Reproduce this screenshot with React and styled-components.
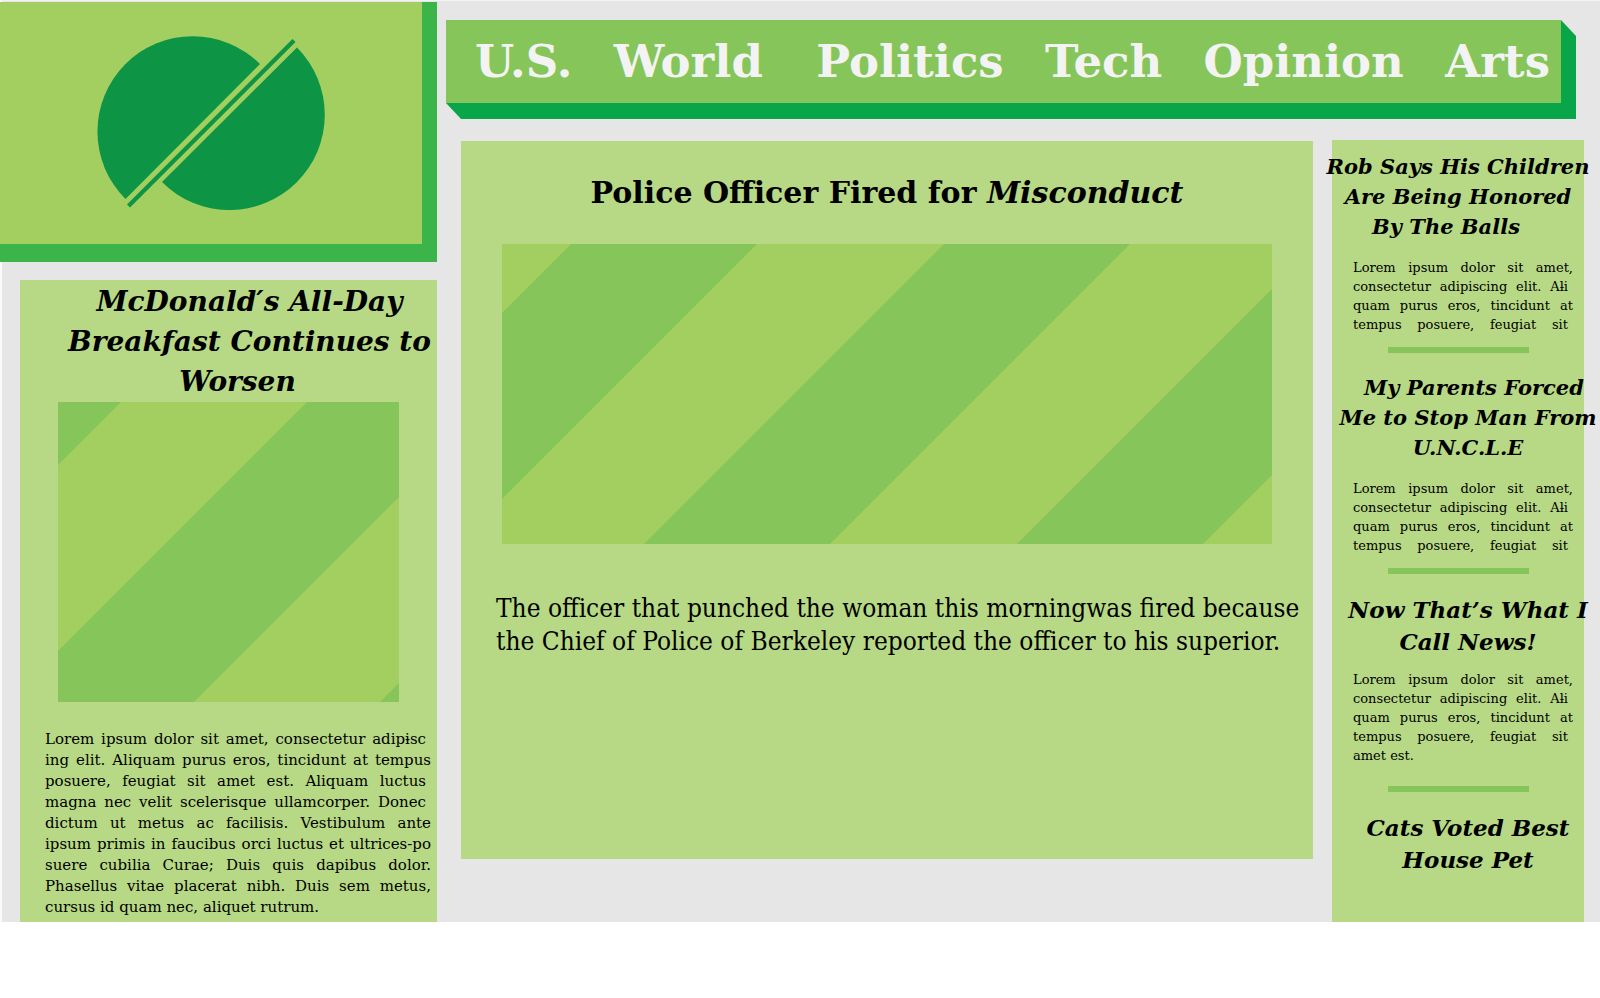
import React from "react";
import styled, { createGlobalStyle } from "styled-components";

const color = {
  page: "#e6e6e6",
  card: "#b7d985",
  lime: "#a2cf60",
  leaf: "#86c559",
  logo: "#0d9444",
  logoEdge: "#3bb54a",
  navEdge: "#09a649",
};

const GlobalStyle = createGlobalStyle`
  * { box-sizing: border-box; }
  body {
    margin: 0;
    background: #fff;
    color: #000;
    font-family: "DejaVu Serif", serif;
  }
`;

const Page = styled.div`
  display: flex;
  min-width: 1280px;
  background: ${color.page};
  border-top: 1px solid #f3f3f3;
  border-left: 2px solid #fafafa;
`;

const LeftColumn = styled.div`
  flex: 0 0 435px;
  display: flex;
  flex-direction: column;
  padding-top: 1px;
`;

const LogoPanel = styled.a`
  display: flex;
  justify-content: center;
  margin: 0 0 18px -2px;
  padding: 32px 0 34px;
  background: ${color.lime};
  border-right: 15px solid ${color.logoEdge};
  border-bottom: 18px solid ${color.logoEdge};
`;

const LeadStory = styled.article`
  flex: 1;
  margin-left: 18px;
  padding: 2px 0;
  background: ${color.card};
`;

const LeadHeading = styled.h2`
  margin: 0;
  padding-left: 42px;
  font-size: 28px;
  line-height: 40px;
  font-style: italic;
  text-align: center;
`;

const HeadLine = styled.span`
  display: block;
  white-space: nowrap;
  padding-left: ${(p) => (p.$lean === "right" ? 12 : 0)}px;
  padding-right: ${(p) => (p.$lean === "left" ? 24 : 0)}px;
`;

const Figure = styled.figure`
  margin: ${(p) => p.$margin};
  svg {
    display: block;
    width: 100%;
    height: 300px;
  }
`;

const Copy = styled.p`
  margin: ${(p) => p.$margin};
  font-size: ${(p) => p.$size}px;
  line-height: ${(p) => p.$leading}px;
`;

const Summary = styled(Copy)`
  font-family: "DejaVu Serif Condensed", "DejaVu Serif", serif;
`;

const CopyLine = styled.span`
  display: block;
  white-space: nowrap;
  text-align: justify;
  text-align-last: ${(p) => (p.$last ? "left" : "justify")};
  padding-right: ${(p) => (p.$short ? 5 : 0)}px;
`;

const Overprint = styled.span`
  display: inline-block;
  width: 0;
  text-align-last: left;
`;

const RightArea = styled.div`
  flex: 1;
  min-width: 0;
  padding: 19px 16px 0 9px;
`;

const NavShell = styled.nav`
  margin-right: 8px;
  padding: 0 15px 16px 0;
  background: ${color.navEdge};
  clip-path: polygon(
    0 0,
    calc(100% - 15px) 0,
    100% 16px,
    100% 100%,
    15px 100%,
    0 calc(100% - 16px)
  );
`;

const NavList = styled.ul`
  display: flex;
  justify-content: space-between;
  margin: 0;
  padding: 9px 11px 9px 29px;
  list-style: none;
  background: ${color.leaf};
`;

const NavItem = styled.li`
  padding-right: ${(p) => (p.$wide ? 12 : 0)}px;
`;

const NavLink = styled.a`
  color: #f3f3f3;
  font-size: 45px;
  line-height: 65px;
  font-weight: bold;
  text-decoration: none;
`;

const Content = styled.div`
  display: flex;
  gap: 19px;
  margin: 21px 0 0 15px;
`;

const MainStory = styled.main`
  flex: 1;
  min-height: 718px;
  align-self: flex-start;
  margin-top: 1px;
  background: ${color.card};
`;

const MainHeading = styled.h1`
  margin: 0;
  padding: 32px 0 31px;
  font-size: 30px;
  line-height: 40px;
  text-align: center;
`;

const Sidebar = styled.aside`
  flex: 0 0 252px;
  padding: 12px 0 34px;
  background: ${color.card};
`;

const SideHeading = styled.h3`
  margin: 0 -20px ${(p) => (p.$large ? 12 : 16)}px;
  padding-left: ${(p) => (p.$indent ? 20 : 0)}px;
  font-size: ${(p) => (p.$large ? 23 : 21)}px;
  line-height: ${(p) => (p.$large ? 32 : 30)}px;
  font-style: italic;
  text-align: center;
`;

const Divider = styled.hr`
  width: 141px;
  height: 6px;
  margin: ${(p) => (p.$loose ? 21 : 13)}px auto 20px;
  border: 0;
  background: ${color.leaf};
`;

const Logo = () => (
  <svg width="230" height="176" viewBox="96 34 230 176" role="img" aria-label="Home">
    <g fill={color.logo}>
      <path d="M260 64 A94.500 94.500 0 0 0 125.500 199 Z" />
      <path d="M297 47.500 A94.500 94.500 0 0 1 162 182 Z" />
      <path d="M292.500 39 L295.500 42 L130 207.500 L127 204.500 Z" />
    </g>
  </svg>
);

const LeadArt = () => (
  <svg viewBox="0 0 341 300" preserveAspectRatio="xMidYMid slice" aria-hidden="true">
    <rect width="341" height="300" fill={color.lime} />
    <g fill={color.leaf}>
      <path d="M0 0H63L0 63Z" />
      <path d="M249 0H436L136 300H-51Z" />
      <path d="M622 0H809L509 300H322Z" />
    </g>
  </svg>
);

const MainArt = () => (
  <svg viewBox="0 0 770 300" preserveAspectRatio="xMidYMid slice" aria-hidden="true">
    <rect width="770" height="300" fill={color.lime} />
    <g fill={color.leaf}>
      <path d="M69 0H255L-45 300H-231Z" />
      <path d="M442 0H628L328 300H142Z" />
      <path d="M815 0H1001L701 300H515Z" />
    </g>
  </svg>
);

const sections = ["U.S.", "World", "Politics", "Tech", "Opinion", "Arts"];

const SideCopy = ({ full }) => (
  <Copy $size={13} $leading={19} $margin="0 11px 0 21px">
    <CopyLine>Lorem ipsum dolor sit amet,</CopyLine>
    <CopyLine $short>
      consectetur adipiscing elit. A<Overprint>-</Overprint>li
    </CopyLine>
    <CopyLine>quam purus eros, tincidunt at</CopyLine>
    <CopyLine $short>tempus posuere, feugiat sit</CopyLine>
    {full && <CopyLine $last>amet est.</CopyLine>}
  </Copy>
);

export default function App() {
  return (
    <>
      <GlobalStyle />
      <Page>
        <LeftColumn>
          <LogoPanel href="#home">
            <Logo />
          </LogoPanel>
          <LeadStory>
            <LeadHeading>
              <HeadLine>McDonald′s All-Day</HeadLine>
              <HeadLine>Breakfast Continues to</HeadLine>
              <HeadLine $lean="left">Worsen</HeadLine>
            </LeadHeading>
            <Figure $margin="0 38px">
              <LeadArt />
            </Figure>
            <Copy $size={15} $leading={21} $margin="27px 6px 0 25px">
              <CopyLine $short>
                Lorem ipsum dolor sit amet, consectetur adip<Overprint>-</Overprint>isc
              </CopyLine>
              <CopyLine>ing elit. Aliquam purus eros, tincidunt at tempus</CopyLine>
              <CopyLine $short>posuere, feugiat sit amet est. Aliquam luctus</CopyLine>
              <CopyLine $short>magna nec velit scelerisque ullamcorper. Donec</CopyLine>
              <CopyLine>dictum ut metus ac facilisis. Vestibulum ante</CopyLine>
              <CopyLine>ipsum primis in faucibus orci luctus et ultrices-po</CopyLine>
              <CopyLine>suere cubilia Curae; Duis quis dapibus dolor.</CopyLine>
              <CopyLine>Phasellus vitae placerat nibh. Duis sem metus,</CopyLine>
              <CopyLine $last>cursus id quam nec, aliquet rutrum.</CopyLine>
            </Copy>
          </LeadStory>
        </LeftColumn>

        <RightArea>
          <NavShell>
            <NavList>
              {sections.map((name) => (
                <NavItem key={name} $wide={name === "World"}>
                  <NavLink href={"#" + name}>{name}</NavLink>
                </NavItem>
              ))}
            </NavList>
          </NavShell>
          <Content>
            <MainStory>
              <MainHeading>
                Police Officer Fired for <em>Misconduct</em>
              </MainHeading>
              <Figure $margin="0 41px">
                <MainArt />
              </Figure>
              <Summary $size={26} $leading={33} $margin="48px 0 0 35px">
                The officer that punched the woman this morningwas fired because
                <br />
                the Chief of Police of Berkeley reported the officer to his superior.
              </Summary>
            </MainStory>
            <Sidebar>
              <SideHeading>
                <HeadLine>Rob Says His Children</HeadLine>
                <HeadLine>Are Being Honored</HeadLine>
                <HeadLine $lean="left">By The Balls</HeadLine>
              </SideHeading>
              <SideCopy />
              <Divider />
              <SideHeading $indent>
                <HeadLine $lean="right">My Parents Forced</HeadLine>
                <HeadLine>Me to Stop Man From</HeadLine>
                <HeadLine>U.N.C.L.E</HeadLine>
              </SideHeading>
              <SideCopy />
              <Divider />
              <SideHeading $large $indent>
                <HeadLine>Now That’s What I</HeadLine>
                <HeadLine>Call News!</HeadLine>
              </SideHeading>
              <SideCopy full />
              <Divider $loose />
              <SideHeading $large $indent>
                <HeadLine>Cats Voted Best</HeadLine>
                <HeadLine>House Pet</HeadLine>
              </SideHeading>
            </Sidebar>
          </Content>
        </RightArea>
      </Page>
    </>
  );
}
